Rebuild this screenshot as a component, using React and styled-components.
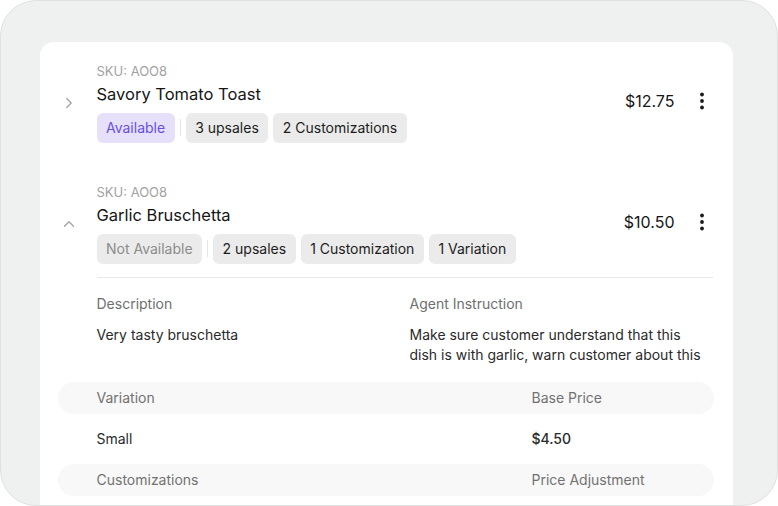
import styled, { createGlobalStyle } from 'styled-components'

const GlobalStyle = createGlobalStyle`
  html, body {
    margin: 0;
    padding: 0;
    background: #ffffff;
  }
  body {
    font-family: Inter, 'Noto Sans', sans-serif;
    color: #1b1b1b;
    -webkit-font-smoothing: antialiased;
  }
  * { box-sizing: border-box; }
`

const items = [
  {
    sku: 'AOO8',
    name: 'Savory Tomato Toast',
    price: '$12.75',
    available: true,
    tags: ['3 upsales', '2 Customizations'],
    open: false
  },
  {
    sku: 'AOO8',
    name: 'Garlic Bruschetta',
    price: '$10.50',
    available: false,
    tags: ['2 upsales', '1 Customization', '1 Variation'],
    open: true,
    description: 'Very tasty bruschetta',
    instruction: 'Make sure customer understand that this dish is with garlic, warn customer about this',
    variations: [{ name: 'Small', price: '$4.50' }],
    customizations: []
  }
]

const Chevron = ({ open }) => (
  <svg width='12' height='12' viewBox='0 0 12 12' fill='none' style={{ transform: open ? 'none' : 'rotate(90deg)' }}>
    <path d='M1.5 8.2 L6 3.8 L10.5 8.2' stroke='#a3a3a3' strokeWidth='1.3' strokeLinecap='round' strokeLinejoin='round' />
  </svg>
)

const Kebab = () => (
  <svg width='24' height='24' viewBox='0 0 24 24' fill='#1b1b1b'>
    <circle cx='12' cy='5.5' r='1.9' />
    <circle cx='12' cy='12' r='1.9' />
    <circle cx='12' cy='18.5' r='1.9' />
  </svg>
)

export default function App () {
  return (
    <>
      <GlobalStyle />
      <Frame>
        <Card>
          {items.map((item, i) => (
            <Item key={i}>
              <Header>
                <ChevronCell><Chevron open={item.open} /></ChevronCell>
                <Main>
                  <Sku>SKU: {item.sku}</Sku>
                  <Name>{item.name}</Name>
                  <Chips>
                    <Chip $status={item.available ? 'on' : 'off'}>
                      {item.available ? 'Available' : 'Not Available'}
                    </Chip>
                    <Sep />
                    {item.tags.map(t => <Chip key={t}>{t}</Chip>)}
                  </Chips>
                </Main>
                <Price>{item.price}</Price>
                <MenuButton><Kebab /></MenuButton>
              </Header>
              {item.open && (
                <>
                  <Details>
                    <Divider />
                    <InfoGrid>
                      <div>
                        <Label>Description</Label>
                        <Value>{item.description}</Value>
                      </div>
                      <div>
                        <Label>Agent Instruction</Label>
                        <Value>{item.instruction}</Value>
                      </div>
                    </InfoGrid>
                  </Details>
                  <Table>
                    <HeadRow>
                      <span>Variation</span>
                      <span>Base Price</span>
                    </HeadRow>
                    {item.variations.map(v => (
                      <BodyRow key={v.name}>
                        <span>{v.name}</span>
                        <Amount>{v.price}</Amount>
                      </BodyRow>
                    ))}
                    <HeadRow>
                      <span>Customizations</span>
                      <span>Price Adjustment</span>
                    </HeadRow>
                    {item.customizations.map(c => (
                      <BodyRow key={c.name}>
                        <span>{c.name}</span>
                        <Amount>{c.price}</Amount>
                      </BodyRow>
                    ))}
                  </Table>
                </>
              )}
            </Item>
          ))}
        </Card>
      </Frame>
    </>
  )
}

const Frame = styled.div`
width: 778px;
height: 506px;
border: 1.5px solid #dfe1e1;
border-radius: 36px;
background: #eff0f0;
overflow: hidden;
padding: 40.5px 44.5px 0 38.5px;
display: flex;
flex-direction: column;
`

const Card = styled.div`
flex: 1;
background: #ffffff;
border-radius: 14px 14px 0 0;
`

const Item = styled.div`
padding: 20px 0;
`

const Header = styled.div`
display: flex;
align-items: center;
padding-right: 19px;
`

const ChevronCell = styled.div`
width: 57px;
flex: none;
display: flex;
justify-content: center;
padding-left: 1px;
padding-top: 1px;
`

const Main = styled.div`
flex: 1;
min-width: 0;
`

const Sku = styled.div`
font-size: 13px;
line-height: 18px;
color: #a2a2a2;
`

const Name = styled.div`
margin-top: 2px;
font-size: 16.5px;
line-height: 24px;
color: #161616;
`

const Chips = styled.div`
margin-top: 7px;
display: flex;
align-items: center;
gap: 5px;
`

const Chip = styled.span`
height: 30px;
padding: 0 9.5px;
border-radius: 6px;
display: inline-flex;
align-items: center;
font-size: 14px;
background: ${p => p.$status === 'on' ? '#e6e0fb' : '#ebebeb'};
color: ${p => p.$status === 'on' ? '#6a50df' : p.$status === 'off' ? '#8b8b8b' : '#1d1d1d'};
`

const Sep = styled.span`
width: 1px;
height: 17px;
background: #e4e4e4;
`

const Price = styled.div`
font-size: 16px;
color: #161616;
margin: 0 15px 2px 0;
`

const MenuButton = styled.div`
width: 24px;
height: 24px;
display: flex;
margin-bottom: 2px;
`

const Details = styled.div`
padding: 0 20px 0 57px;
`

const Divider = styled.div`
margin-top: 13px;
height: 1px;
background: #e9e9e9;
`

const InfoGrid = styled.div`
display: grid;
grid-template-columns: 1fr 1fr;
column-gap: 10px;
padding-top: 16px;
`

const Label = styled.div`
font-size: 14px;
line-height: 20px;
color: #6f6f6f;
`

const Value = styled.div`
margin-top: 11px;
max-width: 296px;
font-size: 14px;
line-height: 20px;
color: #2a2a2a;
`

const Table = styled.div`
margin: 17px 19px 0 18px;
`

const HeadRow = styled.div`
display: grid;
grid-template-columns: 1fr 182px;
align-items: center;
height: 32px;
padding-left: 39px;
border-radius: 16px;
background: #f8f8f8;
font-size: 14px;
color: #727272;
`

const BodyRow = styled.div`
display: grid;
grid-template-columns: 1fr 182px;
align-items: center;
height: 50px;
padding-left: 39px;
font-size: 14px;
color: #2a2a2a;
`

const Amount = styled.span`
font-weight: 500;
`
